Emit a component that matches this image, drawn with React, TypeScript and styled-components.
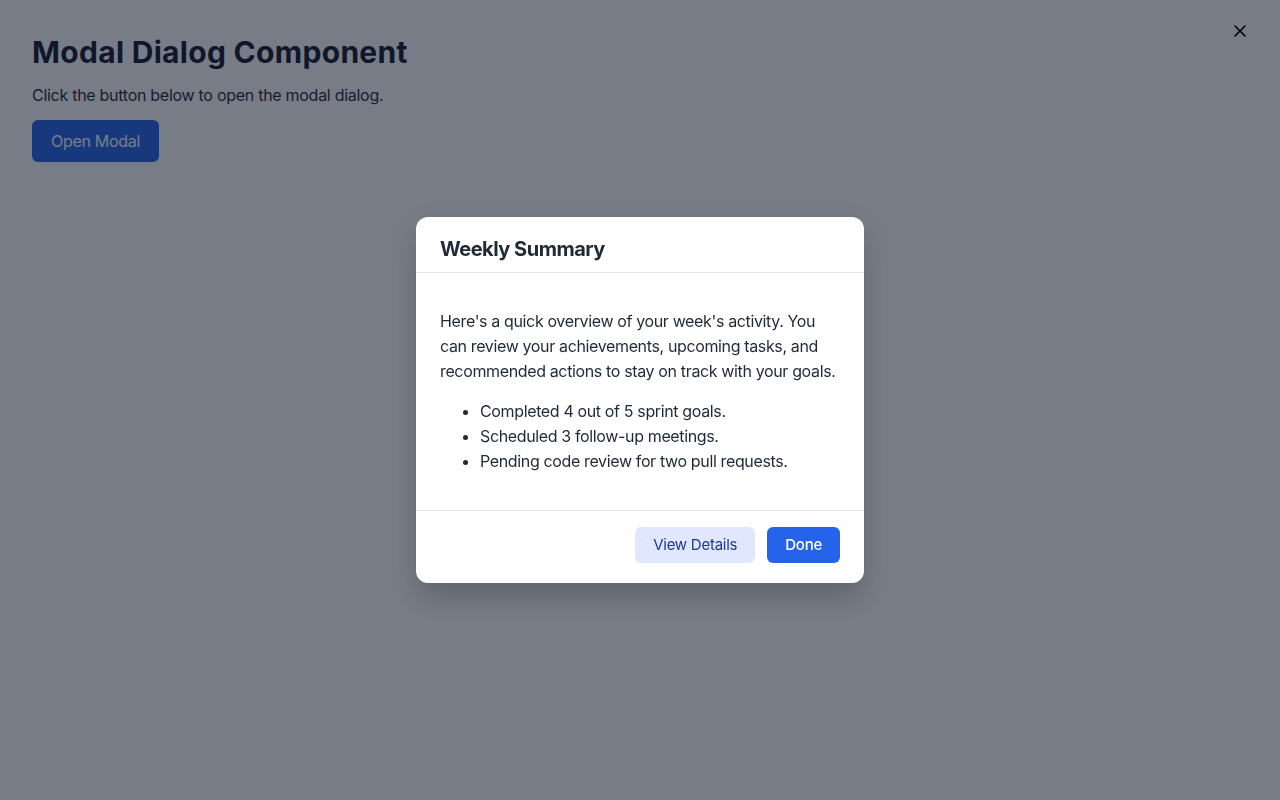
import React from 'react';
import styled, { createGlobalStyle } from 'styled-components';

const GlobalStyle = createGlobalStyle`
  html, body {
    margin: 0;
    padding: 0;
    background: #ffffff;
    font-family: Inter, "Noto Sans", "Liberation Sans", sans-serif;
    color: #111827;
  }
  * {
    box-sizing: border-box;
  }
`;

const Page = styled.main`
  padding: 32px;
  min-height: 800px;
`;

const Title = styled.h1`
  margin: 0 0 11px;
  font-size: 30px;
  line-height: 40px;
  font-weight: 700;
  letter-spacing: 0.3px;
  color: #111827;
`;

const Lead = styled.p`
  margin: 0 0 13px;
  font-size: 16px;
  line-height: 24px;
  letter-spacing: -0.28px;
  color: #1f2937;
`;

const OpenButton = styled.button`
  font-family: inherit;
  font-size: 16px;
  line-height: 22px;
  letter-spacing: -0.3px;
  padding: 10px 19px;
  border: none;
  border-radius: 6px;
  background: #2563eb;
  color: #ffffff;
  cursor: pointer;
`;

const Overlay = styled.div`
  position: fixed;
  inset: 0;
  background: rgba(15, 23, 42, 0.565);
  display: flex;
  align-items: center;
  justify-content: center;
`;

const CloseButton = styled.button`
  position: fixed;
  top: 16px;
  right: 25px;
  width: 30px;
  height: 30px;
  padding: 0;
  border: none;
  background: transparent;
  color: #000000;
  display: flex;
  align-items: center;
  justify-content: center;
  cursor: pointer;
`;

const Dialog = styled.div`
  width: 448px;
  background: #ffffff;
  border-radius: 12px;
  box-shadow: 0 20px 25px -5px rgba(0, 0, 0, 0.12), 0 10px 30px rgba(0, 0, 0, 0.1);
  overflow: hidden;
`;

const Header = styled.div`
  padding: 21px 24px 12px;
  border-bottom: 1px solid #e5e7eb;
`;

const DialogTitle = styled.h2`
  margin: 0;
  font-size: 20px;
  line-height: 22px;
  font-weight: 700;
  letter-spacing: -0.5px;
  color: #1f2937;
`;

const Body = styled.div`
  padding: 20px 24px 20px;
  font-size: 16px;
  line-height: 25px;
  letter-spacing: -0.36px;
  color: #1f2937;
`;

const BodyText = styled.p`
  margin: 16px 0 0;
`;

const List = styled.ul`
  margin: 15px 0 16px;
  padding-left: 40px;
`;

const Footer = styled.div`
  display: flex;
  justify-content: flex-end;
  gap: 12px;
  padding: 16px 24px 20px;
  border-top: 1px solid #e5e7eb;
`;

const ActionButton = styled.button<{ $primary?: boolean }>`
  font-family: inherit;
  font-size: 15px;
  font-weight: ${({ $primary }) => ($primary ? 500 : 400)};
  line-height: 20px;
  letter-spacing: -0.25px;
  padding: 8px 18px;
  border: none;
  border-radius: 6px;
  background: ${({ $primary }) => ($primary ? '#2563eb' : '#e0e7ff')};
  color: ${({ $primary }) => ($primary ? '#ffffff' : '#1e3a8a')};
  cursor: pointer;
`;

export default function App() {
  return (
    <>
      <GlobalStyle />
      <Page>
        <Title>Modal Dialog Component</Title>
        <Lead>Click the button below to open the modal dialog.</Lead>
        <OpenButton>Open Modal</OpenButton>
      </Page>
      <Overlay>
        <CloseButton aria-label="Close">
          <svg width="14" height="14" viewBox="0 0 14 14" fill="none">
            <path d="M2 2L12 12M12 2L2 12" stroke="currentColor" strokeWidth="1.6" strokeLinecap="round" />
          </svg>
        </CloseButton>
        <Dialog role="dialog" aria-modal="true">
          <Header>
            <DialogTitle>Weekly Summary</DialogTitle>
          </Header>
          <Body>
            <BodyText>
              Here's a quick overview of your week's activity. You can review your
              achievements, upcoming tasks, and recommended actions to stay on track with
              your goals.
            </BodyText>
            <List>
              <li>Completed 4 out of 5 sprint goals.</li>
              <li>Scheduled 3 follow-up meetings.</li>
              <li>Pending code review for two pull requests.</li>
            </List>
          </Body>
          <Footer>
            <ActionButton>View Details</ActionButton>
            <ActionButton $primary>Done</ActionButton>
          </Footer>
        </Dialog>
      </Overlay>
    </>
  );
}
